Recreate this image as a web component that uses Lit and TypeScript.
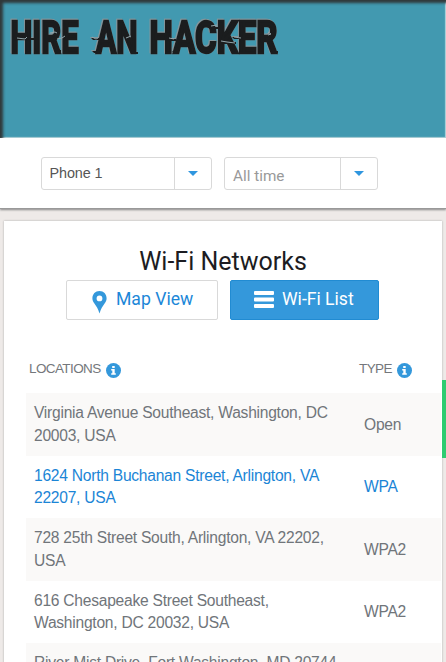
import { LitElement, html, svg, css } from "lit";
import { customElement } from "lit/decorators.js";
import { classMap } from "lit/directives/class-map.js";

const networks = [
  { lines: ["Virginia Avenue Southeast, Washington, DC", "20003, USA"], type: "Open" },
  { lines: ["1624 North Buchanan Street, Arlington, VA", "22207, USA"], type: "WPA", active: true },
  { lines: ["728 25th Street South, Arlington, VA 22202,", "USA"], type: "WPA2" },
  { lines: ["616 Chesapeake Street Southeast,", "Washington, DC 20032, USA"], type: "WPA2" },
  { lines: ["River Mist Drive, Fort Washington, MD 20744,", "USA"], type: "WPA2" },
];

const words = [
  { text: "HIRE", x: 10.5, w: 68 },
  { text: "AN", x: 96, w: 41.5 },
  { text: "HACKER", x: 149.5, w: 128 },
];

// Dark slivers that jut out of the lettering: [x, y, width]
const shards = [
  [26, 38, 8], [54, 50, 7], [91, 38, 9], [92, 51, 9],
  [131, 52, 7], [168, 39, 8], [172, 51, 6], [211, 27, 7],
  [222, 42, 14], [232, 37, 9], [270, 51, 8],
];

// Light nicks cut into the strokes
const nicks = [
  "M17 38l8 1 2-2", "M50 33l5-1 2 1", "M57 39l5-1 3-2", "M92 37l4 2 2-1",
  "M126 38l5-2", "M169 38l5 1", "M211 26l6-1",
  "M221 41l6 1 8 1", "M234 37l7 1", "M268 32l3 2-3 1",
];

@customElement("info-dot")
class InfoDot extends LitElement {
  static styles = css`
    :host { display: block; width: 15px; height: 15px; }
    svg { display: block; }
  `;
  render() {
    return html`<svg width="15" height="15" viewBox="0 0 15 15">
      <circle cx="7.5" cy="7.5" r="7.5" fill="#3498db" />
      <path fill="#fff" d="M6.2 3h2.5v2H6.2zM5.2 6h3.5v4.3h1.1v1.5H5.2v-1.500h1.100V7.500H5.200z" />
    </svg>`;
  }
}

@customElement("select-box")
class SelectBox extends LitElement {
  static styles = css`
    :host {
      display: flex; box-sizing: border-box; height: 33px;
      border: 1px solid #d9d9d9; border-radius: 3px; background: #fff;
    }
    .value { flex: 1; display: flex; align-items: center; padding-left: 7.5px; white-space: nowrap; }
    .arrow { width: 37px; border-left: 1px solid #d9d9d9; display: flex; justify-content: center; padding-top: 13px; box-sizing: border-box; }
  `;
  render() {
    return html`
      <div class="value"><slot></slot></div>
      <div class="arrow"><svg width="10" height="5" viewBox="0 0 10 5"><path d="M0 0h10L5 5z" fill="#2f96df" /></svg></div>
    `;
  }
}

@customElement("app-root")
class AppRoot extends LitElement {
  static styles = css`
    :host {
      display: block; position: relative; box-sizing: border-box; width: 446px; height: 662px;
      overflow: hidden; background: #eeeae8; font-family: "Liberation Sans", Arial, sans-serif;
    }
    .banner {
      height: 138px; background: #4299b0;
      box-shadow: inset 3px 3px 3px 0 #30383a, inset -1px -1px 1px #b4d5dd;
    }
    .logo { display: block; }
    .lettering { filter: drop-shadow(0.7px 0.7px 0.3px #93a3a8) drop-shadow(-0.8px -0.6px 0.3px #82959b); }
    .word { font: 700 44px Roboto, sans-serif; fill: #1b1d1e; stroke: #1b1d1e; stroke-width: 2.4; }
    .filters {
      height: 71px; box-sizing: border-box; display: flex; gap: 12px; padding: 19px 0 0 41px;
      background: #fff; border-bottom: 1px solid #999; box-shadow: 0 1px 2px #888; position: relative;
    }
    .phone { width: 171px; color: #555; font-size: 14.4px; letter-spacing: -0.1px; }
    .phone span { margin-top: -2px; }
    .time { width: 154px; color: #999; font: 15.3px Roboto, sans-serif; }
    .time span { padding: 4px 0 0 0.5px; }
    .card {
      margin: 12px 4px 0; height: 460px; background: #fff; box-shadow: 0 0 2px #aaa;
      padding: 23px 0 0 22px; box-sizing: border-box;
    }
    h1 { margin: 0 22px 0 0; text-align: center; font: 400 25px/36px Roboto, sans-serif; color: #1c1c22; }
    .tabs { display: flex; gap: 12px; padding-left: 40px; }
    .tab {
      display: flex; align-items: center; box-sizing: border-box; height: 40px; border: 1px solid #d9d9d9;
      border-radius: 2px; font: 17.6px Roboto, sans-serif; color: #1c87d8; width: 152px; white-space: nowrap;
    }
    .map { padding-left: 25px; gap: 9px; }
    .map svg { margin-top: 4px; }
    .map span, .list span { margin-top: -3px; }
    .list { width: 149px; padding-left: 23px; gap: 8px; background: #3498db; border-color: #218bd2; color: #fff; }
    .list svg { margin-top: -1px; }
    .head {
      display: grid; grid-template-columns: 330px 1fr; height: 73px; padding: 40px 0 0 3px;
      font-size: 13.5px; letter-spacing: -0.6px; color: #74777b; box-sizing: border-box;
    }
    .cell { display: flex; gap: 5px; align-items: flex-start; line-height: 18px; }
    .cell info-dot { margin-top: 3px; }
    .row {
      display: grid; grid-template-columns: 330px 1fr; align-items: center; height: 62.5px; width: 415px;
      padding: 1px 0 0 8px; box-sizing: border-box; font-size: 15.6px; letter-spacing: -0.25px; line-height: 22.5px; color: #70757a;
    }
    .row:nth-child(odd) { background: #faf9f8; }
    .row.active { color: #1b85d6; }
    .line { white-space: nowrap; }
    .feedback { position: absolute; right: 0; top: 380px; width: 4px; height: 78px; background: #2ecc71; }
  `;
  render() {
    return html`
      <div class="banner">
        <svg class="logo" width="300" height="70" viewBox="0 0 300 70">
          <g class="lettering">
            ${words.map((w) => svg`<text class="word" x=${w.x} y="52.5" textLength=${w.w} lengthAdjust="spacingAndGlyphs">${w.text}</text>`)}
            ${shards.map(([x, y, w]) => svg`<path d="M${x} ${y}h${w}v2h${-w + 2}z" fill="#1b1d1e" />`)}
          </g>
          ${nicks.map((d) => svg`<path d=${d} fill="none" stroke="#93a5aa" stroke-width="1" />`)}
        </svg>
      </div>
      <div class="filters">
        <select-box class="phone"><span>Phone 1</span></select-box>
        <select-box class="time"><span>All time</span></select-box>
      </div>
      <div class="card">
        <h1>Wi-Fi Networks</h1>
        <div class="tabs">
          <div class="tab map">
            <svg width="15" height="23" viewBox="0 0 15 23"><path fill="#3498db" fill-rule="evenodd" d="M7.5 0C3.3 0 .4 3.2.4 7.2c0 2 .7 3.6 2 5.4C4.6 15.5 6 18 7.5 22.5 9 18 10.4 15.5 12.6 12.6c1.3-1.8 2-3.4 2-5.4C14.6 3.2 11.7 0 7.5 0zm0 4.5a2.9 2.9 0 1 1 0 5.8 2.9 2.9 0 0 1 0-5.8z" /></svg>
            <span>Map View</span>
          </div>
          <div class="tab list">
            <svg width="20" height="17" viewBox="0 0 20 17"><path fill="#fff" d="M1 0h18q1 0 1 1v2q0 1-1 1H1Q0 4 0 3V1q0-1 1-1zM1 6.5h18q1 0 1 1v2q0 1-1 1H1q-1 0-1-1v-2q0-1 1-1zM1 13h18q1 0 1 1v2q0 1-1 1H1q-1 0-1-1v-2q0-1 1-1z" /></svg>
            <span>Wi-Fi List</span>
          </div>
        </div>
        <div class="head">
          <div class="cell">LOCATIONS <info-dot></info-dot></div>
          <div class="cell">TYPE <info-dot></info-dot></div>
        </div>
        <div class="rows">
          ${networks.map((n) => html`
            <div class=${classMap({ row: true, active: !!n.active })}>
              <div>${n.lines.map((l) => html`<div class="line">${l}</div>`)}</div>
              <div>${n.type}</div>
            </div>`)}
        </div>
      </div>
      <div class="feedback"></div>
    `;
  }
}
